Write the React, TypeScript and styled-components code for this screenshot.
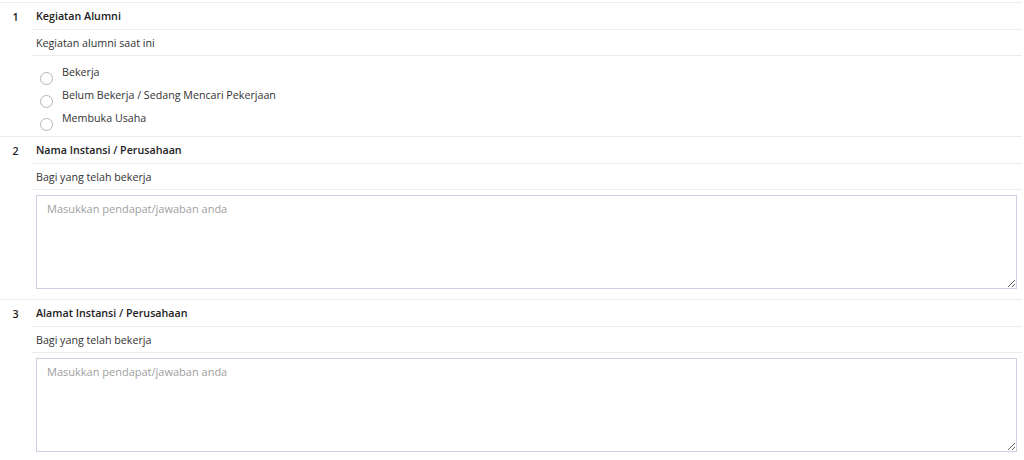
import React from "react";
import styled, { createGlobalStyle } from "styled-components";

const Global = createGlobalStyle`
  html, body { margin: 0; padding: 0; background: #fff; }
  body { font-family: "Open Sans", "Noto Sans", sans-serif; color: #333; }
  * { box-sizing: border-box; }
`;

const Page = styled.div`
  width: 1022px;
  padding-top: 2px;
`;

const Question = styled.section`
  display: grid;
  grid-template-columns: 31px 1fr;
  border-top: 1px solid #ececec;
`;

const Num = styled.div`
  height: 27px;
  display: flex;
  align-items: center;
  justify-content: center;
  font-size: 10.7px;
  font-weight: 600;
  color: #222;
`;

const Body = styled.div`
  display: flex;
  flex-direction: column;
`;

const Title = styled.div`
  height: 27px;
  display: flex;
  align-items: center;
  padding-left: 5px;
  font-size: 10.7px;
  font-weight: 600;
  color: #222;
  border-bottom: 1px solid #ececec;
`;

const Desc = styled.div`
  height: 26px;
  display: flex;
  align-items: center;
  padding-left: 5px;
  font-size: 10.7px;
  color: #333;
  border-bottom: 1px solid #ececec;
`;

const Options = styled.div`
  display: flex;
  flex-direction: column;
  padding: 6px 0 5px 9px;
`;

const Option = styled.label`
  display: flex;
  align-items: flex-start;
  height: 23px;
  font-size: 10.7px;
  color: #333;
`;

const Circle = styled.span`
  width: 13px;
  height: 13px;
  border-radius: 50%;
  border: 1px solid #b5b5b5;
  background: #fff;
  margin-top: 10px;
  margin-right: 9px;
  flex: none;
`;

const OptText = styled.span`
  line-height: 14px;
  margin-top: 3px;
`;

const AreaWrap = styled.div`
  padding: 5px 5px 10px 5px;
`;

const Area = styled.textarea`
  display: block;
  width: 100%;
  height: 94px;
  border: 1px solid #cdd0e0;
  border-radius: 0;
  padding: 5px 10px;
  font-family: "Open Sans", "Noto Sans", sans-serif;
  font-size: 11px;
  color: #333;
  resize: vertical;
  outline: none;
  &::placeholder { color: #a0a0a0; }
`;

type Q = {
  n: number;
  title: string;
  desc: string;
  options?: string[];
};

const questions: Q[] = [
  {
    n: 1,
    title: "Kegiatan Alumni",
    desc: "Kegiatan alumni saat ini",
    options: [
      "Bekerja",
      "Belum Bekerja / Sedang Mencari Pekerjaan",
      "Membuka Usaha",
    ],
  },
  { n: 2, title: "Nama Instansi / Perusahaan", desc: "Bagi yang telah bekerja" },
  { n: 3, title: "Alamat Instansi / Perusahaan", desc: "Bagi yang telah bekerja" },
];

export default function App() {
  return (
    <Page>
      <Global />
      {questions.map((q) => (
        <Question key={q.n}>
          <Num>{q.n}</Num>
          <Body>
            <Title>{q.title}</Title>
            <Desc>{q.desc}</Desc>
            {q.options ? (
              <Options>
                {q.options.map((o) => (
                  <Option key={o}>
                    <Circle />
                    <OptText>{o}</OptText>
                  </Option>
                ))}
              </Options>
            ) : (
              <AreaWrap>
                <Area placeholder="Masukkan pendapat/jawaban anda" />
              </AreaWrap>
            )}
          </Body>
        </Question>
      ))}
    </Page>
  );
}
